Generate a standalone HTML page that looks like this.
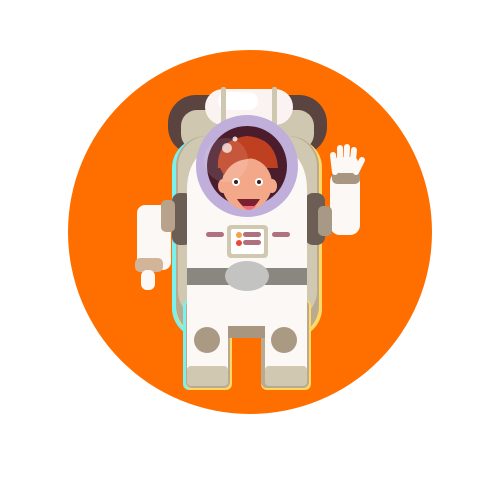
<!DOCTYPE html>
<html><head><style>html,body{margin:0;padding:0;background:#fff;width:500px;height:500px;overflow:hidden}</style></head>
<body>
<svg width="500" height="500" viewBox="0 0 500 500">
<circle cx="250" cy="232" r="182" fill="#ff6f00"/>
<!-- backpack loops -->
<rect x="168" y="95" width="159" height="60" rx="28" fill="#5b4440"/>
<rect x="181" y="110" width="133" height="40" rx="16" fill="#cfc7af"/>
<!-- tank -->
<rect x="205" y="89" width="88" height="36" rx="18" fill="#fbf2f2"/>
<rect x="218" y="92" width="40" height="18" rx="9" fill="#fff"/>
<rect x="221" y="87" width="5" height="40" rx="2" fill="#cfc7af"/>
<rect x="272" y="87" width="5" height="40" rx="2" fill="#cfc7af"/>
<!-- shadow body -->
<rect x="172" y="138" width="150" height="200" rx="30" fill="#79f2ee"/>
<rect x="176" y="138" width="146" height="200" rx="30" fill="#ffd866"/>
<rect x="176" y="136" width="143" height="200" rx="30" fill="#b8ab92"/>
<rect x="178" y="136" width="139" height="185" rx="30" fill="#d0c8b0"/>
<!-- leg shadows -->
<rect x="183" y="300" width="47" height="90" rx="6" fill="#79f2ee"/>
<rect x="186" y="300" width="46" height="90" rx="6" fill="#ffd866"/>
<rect x="261" y="300" width="50" height="90" rx="6" fill="#ffd866"/>
<rect x="186" y="300" width="44" height="88" rx="6" fill="#b8ab92"/>
<rect x="261" y="300" width="48" height="88" rx="6" fill="#b8ab92"/>
<!-- shoulders -->
<rect x="172" y="193" width="20" height="52" rx="8" fill="#6c5e55"/>
<rect x="305" y="193" width="20" height="52" rx="8" fill="#6c5e55"/>
<!-- left arm -->
<rect x="137" y="205" width="34" height="65" rx="8" fill="#fcf8f6"/>
<rect x="161" y="200" width="14" height="32" rx="5" fill="#b8a28c"/>
<rect x="135" y="258" width="28" height="14" rx="5" fill="#d2b498"/>
<rect x="141" y="270" width="14" height="20" rx="6" fill="#fcf8f6"/>
<!-- right arm -->
<rect x="330" y="172" width="30" height="63" rx="10" fill="#fcf8f6"/>
<rect x="318" y="206" width="14" height="30" rx="5" fill="#a89886"/>
<rect x="332" y="170" width="28" height="14" rx="5" fill="#a89680"/>
<path d="M335 172 L333 155 M340 170 L340 148 M346 170 L347 147 M352 170 L354 150 M356 172 L362 160" stroke="#fcf8f6" stroke-width="6" stroke-linecap="round"/>
<rect x="334" y="157" width="24" height="16" rx="5" fill="#fcf8f6"/>
<!-- body -->
<path d="M187 190 Q187 140 247 140 Q307 140 307 190 L307 380 L265 380 L265 328 L228 328 L228 380 L187 380 Z" fill="#fcf8f6"/>
<rect x="228" y="326" width="37" height="12" fill="#a89680"/>
<rect x="187" y="366" width="41" height="20" rx="4" fill="#d0c8b0"/>
<rect x="265" y="366" width="42" height="20" rx="4" fill="#d0c8b0"/>
<circle cx="207" cy="340" r="13" fill="#aa9a83"/>
<circle cx="284" cy="340" r="13" fill="#aa9a83"/>
<!-- belt -->
<rect x="187" y="268" width="120" height="17" fill="#8a8680"/>
<ellipse cx="247" cy="276" rx="22" ry="15" fill="#c3c4c1"/>
<!-- chest -->
<rect x="227" y="225" width="41" height="33" rx="4" fill="#d0c8b0"/>
<rect x="231" y="229" width="33" height="25" rx="2" fill="#fff"/>
<circle cx="239" cy="235" r="3" fill="#f5a04a"/>
<circle cx="239" cy="243" r="3" fill="#e84a3a"/>
<rect x="243" y="232" width="18" height="5" rx="2.5" fill="#b0707e"/>
<rect x="243" y="240" width="18" height="5" rx="2.5" fill="#b0707e"/>
<rect x="206" y="232" width="18" height="5" rx="2.5" fill="#b0707e"/>
<rect x="272" y="232" width="18" height="5" rx="2.5" fill="#b0707e"/>
<!-- helmet -->
<circle cx="247" cy="166" r="51" fill="#c0aedb"/>
<circle cx="247" cy="166" r="40" fill="#4b1c2c"/>
<path d="M218 168 Q216 140 247 136 Q276 138 278 168 Z" fill="#bf4020"/>
<ellipse cx="247" cy="184" rx="25" ry="26" fill="#f3a88a"/>
<path d="M220 168 Q220 143 248 140 Q275 143 276 165 Q262 155 242 160 Q230 163 224 175 Z" fill="#bf4020"/>
<ellipse cx="223" cy="186" rx="5" ry="7" fill="#f3a88a"/>
<ellipse cx="272" cy="186" rx="5" ry="7" fill="#f3a88a"/>
<circle cx="236" cy="182" r="4" fill="#fff"/><circle cx="236" cy="182" r="2" fill="#3a1a1a"/>
<circle cx="259" cy="182" r="4" fill="#fff"/><circle cx="259" cy="182" r="2" fill="#3a1a1a"/>
<path d="M237 199 Q249 218 260 199 Z" fill="#7a2030"/>
<path d="M242 206 Q249 214 256 206 Z" fill="#ef6b7a"/>
<circle cx="227" cy="148" r="5" fill="#fff" opacity="0.7"/>
<circle cx="235" cy="139" r="2.5" fill="#fff" opacity="0.8"/>
<circle cx="226" cy="160" r="22" fill="#fff" opacity="0.12"/>
</svg>
</body></html>
